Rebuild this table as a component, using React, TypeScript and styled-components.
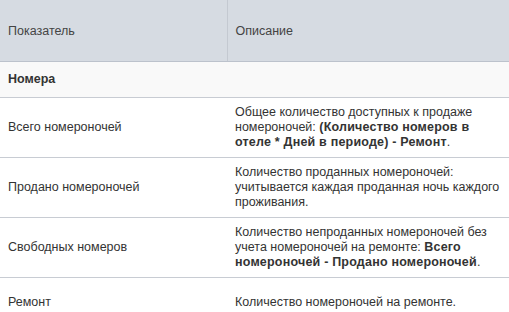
import React from "react"
import styled, { createGlobalStyle } from "styled-components"

const GlobalStyle = createGlobalStyle`
  html, body {
    margin: 0;
    padding: 0;
    background: #ffffff;
  }
  body {
    font-family: "Liberation Sans", Arial, sans-serif;
    font-size: 12.5px;
    color: #333333;
  }
`

const Table = styled.table`
  width: 509px;
  border-collapse: collapse;
  table-layout: fixed;
`

const HeadCell = styled.th<{ divider?: boolean }>`
  height: 61px;
  padding: 0 8px;
  background: #d6dbe2;
  color: #444444;
  font-weight: normal;
  text-align: left;
  border-bottom: 1px solid #bcc2cc;
  border-right: ${({ divider }) => (divider ? "1px solid #c4c9d1" : "none")};
`

const SectionCell = styled.td`
  height: 35px;
  padding: 0 8px;
  background: #f9f9f9;
  font-weight: bold;
  line-height: 15px;
  border-bottom: 1px solid #c8ccd3;
`

const Cell = styled.td<{ wide?: boolean }>`
  height: 34px;
  padding: 7px 8px;
  padding-right: ${({ wide }) => (wide ? "4px" : "8px")};
  vertical-align: middle;
  line-height: 15px;
  border-bottom: 1px solid #c8ccd3;
`

const Strong = styled.b`
  font-weight: bold;
  letter-spacing: 0.2px;
`

type Row = {
  name: string
  desc: React.ReactNode
}

const rows: Row[] = [
  {
    name: "Всего номероночей",
    desc: (
      <>
        Общее количество доступных к продаже номероночей:{" "}
        <Strong>(Количество номеров в отеле * Дней в периоде) - Ремонт</Strong>.
      </>
    ),
  },
  {
    name: "Продано номероночей",
    desc: "Количество проданных номероночей: учитывается каждая проданная ночь каждого проживания.",
  },
  {
    name: "Свободных номеров",
    desc: (
      <>
        Количество непроданных номероночей без учета номероночей на ремонте:{" "}
        <Strong>Всего номероночей - Продано номероночей</Strong>.
      </>
    ),
  },
  {
    name: "Ремонт",
    desc: "Количество номероночей на ремонте.",
  },
]

export default function App() {
  return (
    <>
      <GlobalStyle />
      <Table>
        <colgroup>
          <col style={{ width: 227 }} />
          <col />
        </colgroup>
        <thead>
          <tr>
            <HeadCell divider>Показатель</HeadCell>
            <HeadCell>Описание</HeadCell>
          </tr>
        </thead>
        <tbody>
          <tr>
            <SectionCell colSpan={2}>Номера</SectionCell>
          </tr>
          {rows.map((row) => (
            <tr key={row.name}>
              <Cell>{row.name}</Cell>
              <Cell wide>{row.desc}</Cell>
            </tr>
          ))}
        </tbody>
      </Table>
    </>
  )
}
